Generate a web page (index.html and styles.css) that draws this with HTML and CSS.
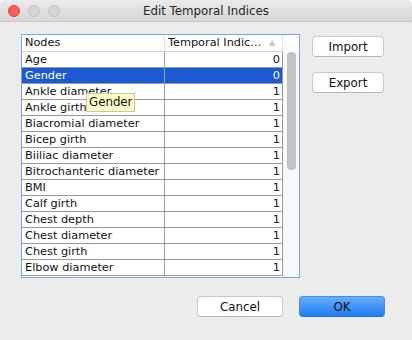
FILE: index.html
```html
<!DOCTYPE html>
<html lang="en">
<head>
    <meta charset="UTF-8">
    <meta name="viewport" content="width=device-width, initial-scale=1.0">
    <title>Edit Temporal Indices</title>
    <link rel="stylesheet" href="styles.css">
</head>
<body>
    <div class="janela">
        <div class="barraTitulo">
            <div class="semaforo">
                <span class="luz vermelha"></span>
                <span class="luz"></span>
                <span class="luz"></span>
            </div>
            <div class="titulo">Edit Temporal Indices</div>
        </div>
        <div class="conteudo">
            <div class="linhaPrincipal">
                <div class="painelTabela">
                    <div class="areaTabela">
                        <table>
                            <thead>
                                <tr>
                                    <th class="colNome">Nodes</th>
                                    <th class="colIndice">Temporal Indic...<span class="seta">&#9650;</span></th>
                                </tr>
                            </thead>
                            <tbody>
                                <tr><td>Age</td><td class="num">0</td></tr>
                                <tr class="selecionada"><td>Gender</td><td class="num">0</td></tr>
                                <tr><td>Ankle diameter</td><td class="num">1</td></tr>
                                <tr><td>Ankle girth</td><td class="num">1</td></tr>
                                <tr><td>Biacromial diameter</td><td class="num">1</td></tr>
                                <tr><td>Bicep girth</td><td class="num">1</td></tr>
                                <tr><td>Biiliac diameter</td><td class="num">1</td></tr>
                                <tr><td>Bitrochanteric diameter</td><td class="num">1</td></tr>
                                <tr><td>BMI</td><td class="num">1</td></tr>
                                <tr><td>Calf girth</td><td class="num">1</td></tr>
                                <tr><td>Chest depth</td><td class="num">1</td></tr>
                                <tr><td>Chest diameter</td><td class="num">1</td></tr>
                                <tr><td>Chest girth</td><td class="num">1</td></tr>
                                <tr><td>Elbow diameter</td><td class="num">1</td></tr>
                            </tbody>
                        </table>
                    </div>
                    <div class="barraRolagem">
                        <div class="cantoTopo"></div>
                        <div class="trilho"><div class="polegar"></div></div>
                    </div>
                    <div class="dica">Gender</div>
                </div>
                <div class="botoesLado">
                    <button class="botao">Import</button>
                    <button class="botao">Export</button>
                </div>
            </div>
            <div class="rodape">
                <button class="botao largo">Cancel</button>
                <button class="botao largo principal">OK</button>
            </div>
        </div>
    </div>
</body>
</html>
```

FILE: styles.css
```css
body {
    margin: 0;
    background: #ffffff;
    font-family: "DejaVu Sans", sans-serif;
}
.janela {
    width: 412px;
    height: 340px;
    background: #ececec;
    border-radius: 5px 5px 0 0;
    overflow: hidden;
    display: flex;
    flex-direction: column;
}
.barraTitulo {
    height: 21px;
    border-bottom: 1px solid #c8c8c8;
    background: linear-gradient(#ebebeb, #d6d6d6);
    display: flex;
    align-items: center;
    position: relative;
}
.semaforo {
    display: flex;
    gap: 8px;
    padding-left: 8px;
}
.luz {
    width: 12px;
    height: 12px;
    border-radius: 50%;
    background: #d4d4d4;
    box-sizing: border-box;
    border: 1px solid #c4c4c4;
}
.luz.vermelha {
    background: #fc5f57;
    border-color: #e0443e;
}
.titulo {
    position: absolute;
    left: 0;
    right: 0;
    text-align: center;
    font-size: 11.8px;
    color: #262626;
}
.conteudo {
    flex: 1;
    display: flex;
    flex-direction: column;
    padding: 12px 0 0 21px;
}
.linhaPrincipal {
    display: flex;
}
.painelTabela {
    position: relative;
    width: 277px;
    height: 242px;
    border: 1px solid #76a8e6;
    background: #ffffff;
    display: flex;
}
.areaTabela {
    width: 261px;
    overflow: hidden;
}
table {
    width: 261px;
    border-collapse: collapse;
    font-size: 11.3px;
    color: #111111;
}
th, td {
    padding: 0 2px 0 3px;
    white-space: nowrap;
}
th {
    height: 16px;
    line-height: 16px;
    font-weight: normal;
    text-align: left;
    border-bottom: 1px solid #d0d0d0;
    border-right: 1px solid #e2e2e2;
}
th.colNome {
    width: 137px;
}
.seta {
    color: #c6c6c6;
    font-size: 8px;
    margin-left: 8px;
    vertical-align: 1px;
}
td {
    height: 14px;
    line-height: 14px;
    padding-top: 1px;
    border-bottom: 1px solid #9a9a9a;
    border-right: 1px solid #9a9a9a;
}
td.num {
    text-align: right;
}
tr.selecionada td {
    background: #1c5ad3;
    color: #ffffff;
}
.barraRolagem {
    width: 16px;
    display: flex;
    flex-direction: column;
    background: #f8f8f8;
}
.cantoTopo {
    height: 17px;
    background: #ffffff;
}
.trilho {
    flex: 1;
    padding: 0 3px 0 4px;
}
.polegar {
    height: 118px;
    border-radius: 4px;
    background: #c2c2c2;
}
.dica {
    position: absolute;
    left: 64px;
    top: 58px;
    padding: 1px 2px;
    background: #ffffcc;
    border: 1px solid #c9c9a0;
    font-size: 11.8px;
    line-height: 15px;
    color: #111111;
}
.botoesLado {
    display: flex;
    flex-direction: column;
    gap: 15px;
    margin-left: 12px;
    padding-top: 2px;
}
.botao {
    width: 72px;
    height: 21px;
    padding: 0;
    background: #ffffff;
    border: 1px solid #c9c9c9;
    border-bottom-color: #b6b6b6;
    border-radius: 4px;
    font-family: "DejaVu Sans", sans-serif;
    font-size: 11.8px;
    color: #111111;
}
.botao.largo {
    width: 86px;
}
.rodape {
    display: flex;
    justify-content: flex-end;
    gap: 16px;
    padding: 18px 27px 0 0;
}
.botao.principal {
    background: linear-gradient(#68adf8, #1b7df6);
    border-color: #3d8ef0;
    border-bottom-color: #2a6fd8;
}
```
